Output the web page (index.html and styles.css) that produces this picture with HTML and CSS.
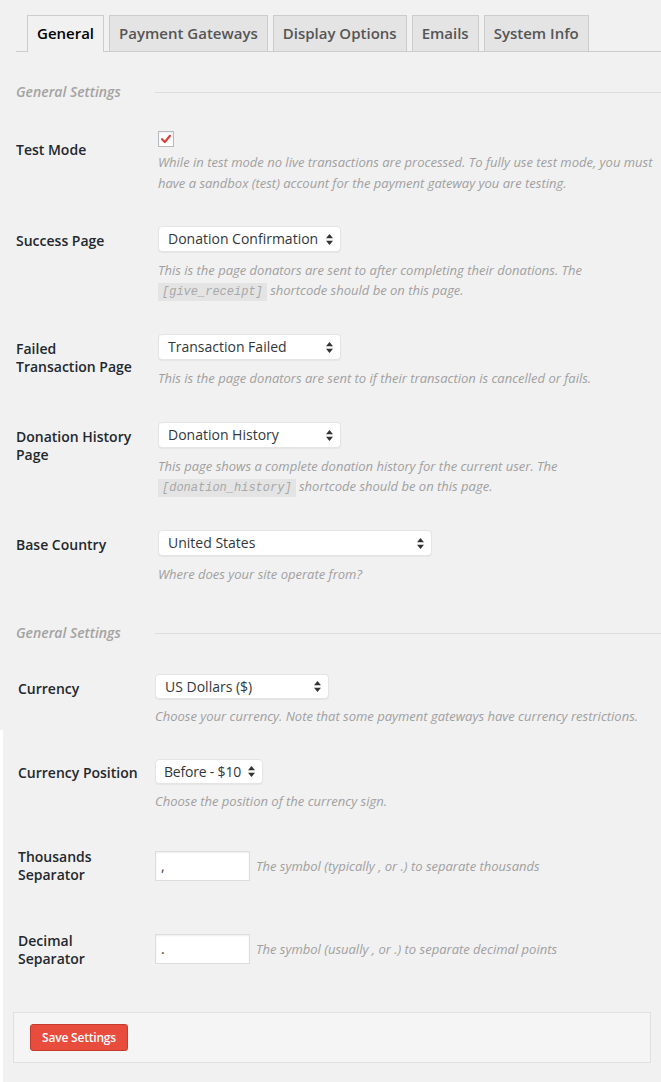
FILE: index.html
```html
<!DOCTYPE html>
<html>
<head>
<meta charset="utf-8">
<title>Settings</title>
<link rel="stylesheet" href="styles.css">
</head>
<body>
<div class="page">
  <nav class="tabs">
    <span class="tab active">General</span>
    <span class="tab">Payment Gateways</span>
    <span class="tab">Display Options</span>
    <span class="tab">Emails</span>
    <span class="tab">System Info</span>
  </nav>

  <div class="section top">
    <div class="heading h1"><h3>General Settings</h3><span class="rule"></span></div>

    <div class="row r-test">
      <div class="th">Test Mode</div>
      <div class="td">
        <span class="checkbox"><svg width="14" height="14" viewBox="0 0 14 14"><path d="M3 7.2 L5.8 10 L11 3.8" fill="none" stroke="#d9423c" stroke-width="2.2" stroke-linecap="round" stroke-linejoin="round"/></svg></span>
        <p class="desc">While in test mode no live transactions are processed. To fully use test mode, you must have a sandbox (test) account for the payment gateway you are testing.</p>
      </div>
    </div>

    <div class="row r-succ">
      <div class="th">Success Page</div>
      <div class="td">
        <div class="select w183">Donation Confirmation<svg class="arrows" width="7" height="11" viewBox="0 0 7 11"><path d="M3.5 0 L7 4.3 L0 4.3 Z M0 6.7 L7 6.7 L3.5 11 Z" fill="#333"/></svg></div>
        <p class="desc">This is the page donators are sent to after completing their donations. The <code>[give_receipt]</code> shortcode should be on this page.</p>
      </div>
    </div>

    <div class="row r-fail">
      <div class="th two">Failed Transaction Page</div>
      <div class="td">
        <div class="select w183">Transaction Failed<svg class="arrows" width="7" height="11" viewBox="0 0 7 11"><path d="M3.5 0 L7 4.3 L0 4.3 Z M0 6.7 L7 6.7 L3.5 11 Z" fill="#333"/></svg></div>
        <p class="desc">This is the page donators are sent to if their transaction is cancelled or fails.</p>
      </div>
    </div>

    <div class="row">
      <div class="th two">Donation History Page</div>
      <div class="td">
        <div class="select w183">Donation History<svg class="arrows" width="7" height="11" viewBox="0 0 7 11"><path d="M3.5 0 L7 4.3 L0 4.3 Z M0 6.7 L7 6.7 L3.5 11 Z" fill="#333"/></svg></div>
        <p class="desc">This page shows a complete donation history for the current user. The <code>[donation_history]</code> shortcode should be on this page.</p>
      </div>
    </div>

    <div class="row r-base">
      <div class="th">Base Country</div>
      <div class="td">
        <div class="select w274">United States<svg class="arrows" width="7" height="11" viewBox="0 0 7 11"><path d="M3.5 0 L7 4.3 L0 4.3 Z M0 6.7 L7 6.7 L3.5 11 Z" fill="#333"/></svg></div>
        <p class="desc">Where does your site operate from?</p>
      </div>
    </div>

    <div class="heading h2"><h3>General Settings</h3><span class="rule"></span></div>
  </div>

  <div class="section mid">
    <div class="row r-cur">
      <div class="th">Currency</div>
      <div class="td">
        <div class="select w174 short">US Dollars ($)<svg class="arrows" width="7" height="11" viewBox="0 0 7 11"><path d="M3.5 0 L7 4.3 L0 4.3 Z M0 6.7 L7 6.7 L3.5 11 Z" fill="#333"/></svg></div>
        <p class="desc">Choose your currency. Note that some payment gateways have currency restrictions.</p>
      </div>
    </div>
  </div>

  <div class="section lower">
    <div class="row r-pos">
      <div class="th">Currency Position</div>
      <div class="td">
        <div class="select w108 short tight">Before - $10<svg class="arrows" width="7" height="11" viewBox="0 0 7 11"><path d="M3.5 0 L7 4.3 L0 4.3 Z M0 6.7 L7 6.7 L3.5 11 Z" fill="#333"/></svg></div>
        <p class="desc">Choose the position of the currency sign.</p>
      </div>
    </div>

    <div class="row r-thou">
      <div class="th two up3">Thousands Separator</div>
      <div class="td inline">
        <span class="input">,</span>
        <span class="desc">The symbol (typically , or .) to separate thousands</span>
      </div>
    </div>

    <div class="row r-dec">
      <div class="th two up2">Decimal Separator</div>
      <div class="td inline">
        <span class="input">.</span>
        <span class="desc">The symbol (usually , or .) to separate decimal points</span>
      </div>
    </div>

    <div class="savebox">
      <button class="save">Save Settings</button>
    </div>
  </div>
</div>
</body>
</html>
```

FILE: styles.css
```css
* { box-sizing: border-box; }

html, body {
  margin: 0;
  padding: 0;
  background: #f1f1f1;
}

body {
  font-family: "Open Sans", "Noto Sans", sans-serif;
  color: #23282d;
  width: 661px;
  height: 1082px;
  overflow: hidden;
}

.page {
  padding-top: 15px;
}

/* tabs */
.tabs {
  display: flex;
  gap: 5px;
  margin-left: 16px;
  padding-left: 11px;
  border-bottom: 1px solid #ccc;
  height: 37px;
  align-items: flex-start;
}

.tab {
  display: block;
  height: 36px;
  line-height: 35px;
  padding: 0 9px;
  border: 1px solid #ccc;
  border-bottom: none;
  background: #e4e4e4;
  color: #555;
  font-size: 15px;
  font-weight: 600;
  white-space: nowrap;
}

.tab.active {
  height: 37px;
  background: #f1f1f1;
  color: #000;
}

/* section headings */
.heading {
  display: flex;
  align-items: center;
}

.heading h3 {
  margin: 0;
  width: 139px;
  font-size: 14px;
  line-height: 20px;
  font-style: italic;
  font-weight: 600;
  color: #a3a3a3;
}

.heading .rule {
  flex: 1;
  height: 1px;
  background: #dcdcdc;
}

.h1 { margin-top: 30px; }
.h2 { margin-top: 39px; }

.section.top {
  padding-left: 16px;
}

.section.mid {
  padding-left: 18px;
}

.section.lower {
  margin-top: 4px;
  border-left: 3px solid #fff;
  padding-left: 15px;
  padding-top: 29px;
  padding-bottom: 19px;
}

/* rows */
.row {
  display: flex;
  align-items: flex-start;
  margin-top: 34px;
}

.th {
  flex: 0 0 142px;
  font-size: 14px;
  font-weight: 600;
  line-height: 20px;
  padding-top: 5px;
  color: #23282d;
}

.th.two {
  line-height: 18px;
  padding-top: 6px;
  padding-right: 22px;
}

.mid .th, .lower .th {
  flex-basis: 137px;
}

.lower .th.two {
  padding-right: 17px;
}

.th.up3 { padding-top: 0; margin-top: -3px; }
.th.up2 { padding-top: 0; margin-top: -2px; }

.td {
  flex: 1;
  padding-right: 6px;
}

.td.inline {
  display: flex;
  align-items: center;
}

.r-test { margin-top: 29px; }
.r-test .th { padding-top: 9px; }
.r-succ { margin-top: 32px; }
.r-fail { margin-top: 32px; }
.r-base { margin-top: 32px; }
.r-cur { margin-top: 31px; }
.r-pos { margin-top: 0; }
.r-pos .th { padding-top: 4px; }
.r-thou { margin-top: 40px; }
.r-dec { margin-top: 50px; }

.checkbox {
  display: flex;
  align-items: center;
  justify-content: center;
  width: 16px;
  height: 16px;
  background: #fff;
  border: 1px solid #b4b9be;
  box-shadow: inset 0 1px 2px rgba(0,0,0,.08);
  margin-bottom: 5px;
}

.desc {
  margin: 0;
  font-size: 13px;
  line-height: 21px;
  font-style: italic;
  color: #a0a0a0;
}

.select + .desc {
  margin-top: 8px;
  line-height: 20px;
}

code {
  font-family: "Liberation Mono", "DejaVu Sans Mono", monospace;
  font-size: 12px;
  font-style: italic;
  background: #e4e4e4;
  color: #a8a8a8;
  padding: 2px 4px;
}

.select {
  position: relative;
  height: 26px;
  line-height: 24px;
  padding-left: 9px;
  background: #fff;
  border: 1px solid #e4e4e4;
  border-radius: 4px;
  box-shadow: 0 1px 1px rgba(0,0,0,.05);
  font-size: 14px;
  color: #32373c;
}

.select.short { height: 25px; line-height: 23px; }
.select.short + .desc { margin-top: 7px; }
.select.tight { padding-left: 8px; letter-spacing: -0.2px; }

.select .arrows {
  position: absolute;
  right: 7px;
  top: 50%;
  margin-top: -5.5px;
}

.w183 { width: 183px; }
.w274 { width: 274px; }
.w174 { width: 174px; }
.w108 { width: 108px; }

.input {
  display: block;
  flex: 0 0 95px;
  width: 95px;
  height: 30px;
  line-height: 28px;
  padding-left: 5px;
  background: #fff;
  border: 1px solid #ddd;
  box-shadow: inset 0 1px 2px rgba(0,0,0,.07);
  font-size: 14px;
  color: #32373c;
}

.td.inline .desc {
  margin-left: 6px;
  white-space: nowrap;
}

.savebox {
  margin: 44px 10px 0 -5px;
  padding: 11px 16px;
  background: #f5f5f5;
  border: 1px solid #e0e0e0;
}

.save {
  display: block;
  height: 27px;
  width: 98px;
  padding: 0;
  background: #e74c3c;
  border: 1px solid #c63b2d;
  border-radius: 3px;
  color: #fff;
  font-family: "Open Sans", sans-serif;
  font-size: 12px;
  font-weight: 600;
  letter-spacing: -0.2px;
}
```
